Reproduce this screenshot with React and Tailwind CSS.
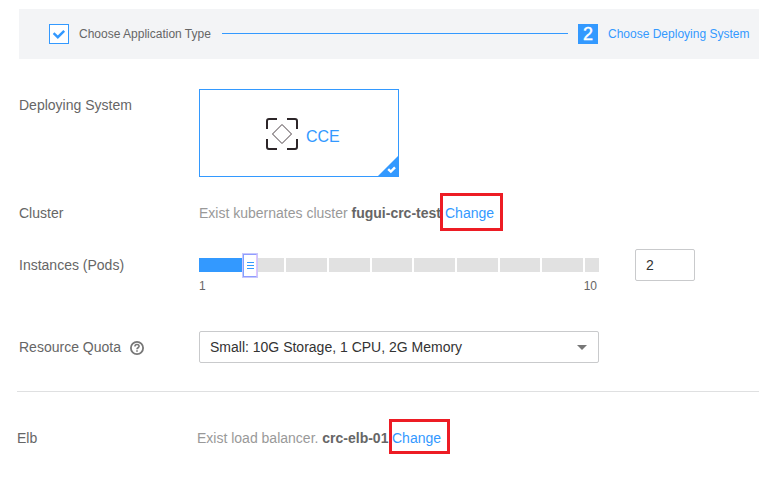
const SEGMENTS = [
  'w-[85px]',
  'w-[41px]',
  'w-[41px]',
  'w-[40px]',
  'w-[41px]',
  'w-[41px]',
  'w-[40px]',
  'w-[41px]',
  'w-[14px]',
];

function StepBar() {
  return (
    <header className="ml-[19px] flex h-[50px] items-center bg-[#f3f4f6] pl-[30px] text-xs">
      <span className="flex size-5 shrink-0 items-center justify-center border border-[#3399ff] bg-white">
        <svg width="14" height="12" viewBox="0 0 14 12" fill="none">
          <path d="M1.6 5.2 L5.8 9.2 L12.2 2.8" stroke="#3399ff" strokeWidth="2.4" />
        </svg>
      </span>
      <span className="ml-2.5 w-[133px] whitespace-nowrap">Choose Application Type</span>
      <span className="mb-px ml-2.5 h-px w-[346px] bg-[#3399ff]" />
      <span className="ml-2.5 flex size-5 items-center justify-center bg-[#3399ff] text-lg leading-5 text-white [-webkit-text-stroke:0.4px_white]">2</span>
      <span className="ml-2.5 whitespace-nowrap text-[#3399ff]">Choose Deploying System</span>
    </header>
  );
}

function SystemCard() {
  return (
    <div className="relative flex h-[88px] w-[200px] items-center border border-[#3399ff] pl-[66px]">
      <svg className="mt-px" width="32" height="32" viewBox="0 0 32 32" fill="none">
        <path
          d="M1 11V3Q1 1 3 1H11 M21 1H29Q31 1 31 3V11 M31 21V29Q31 31 29 31H21 M11 31H3Q1 31 1 29V21"
          stroke="#2d2629"
          strokeWidth="2"
        />
        <path d="M16 6.5L25.5 16L16 25.5L6.5 16Z" stroke="#4b4045" />
      </svg>
      <span className="mt-2 ml-2 text-base leading-5 text-[#3399ff]">CCE</span>
      <svg className="absolute right-0 bottom-0" width="20" height="20" viewBox="0 0 20 20" fill="none">
        <path d="M20 0V20H0Z" fill="#3399ff" />
        <path d="M10.2 13.2L12.8 15.6L17 11.3" stroke="white" strokeWidth="2.4" />
      </svg>
    </div>
  );
}

function Slider() {
  return (
    <div className="w-[400px]">
      <div className="relative flex h-3.5 gap-0.5">
        {SEGMENTS.map((width, i) => (
          <span key={i} className={`${width} h-full shrink-0 bg-[#e1e1e1]`} />
        ))}
        <span className="absolute top-0 left-0 h-full w-11 bg-[#3399ff]" />
        <span className="absolute -top-[5px] left-[43px] h-[25px] w-4 border border-[#c8c8fc]">
          <span className="flex h-full flex-col items-center justify-center gap-0.5 border border-t-[#8f9dff] border-r-[#e3c4fb] border-b-[#8f9dff] border-l-[#80a0ff] bg-white">
            <span className="h-px w-[7px] bg-[#3399ff]" />
            <span className="h-px w-[7px] bg-[#3399ff]" />
            <span className="h-px w-[7px] bg-[#3399ff]" />
          </span>
        </span>
      </div>
      <div className="mt-1.5 flex justify-between pr-0.5 text-xs leading-4">
        <span>1</span>
        <span>10</span>
      </div>
    </div>
  );
}

function Label({ children }) {
  return <div className="flex w-[180px] shrink-0 items-center">{children}</div>;
}

export default function App() {
  return (
    <main className="h-[478px] w-[759px] overflow-hidden bg-white pt-[9px] font-['Liberation_Sans',Arial,sans-serif] text-sm leading-5 text-[#666]">
      <StepBar />
      <section className="mt-[30px] flex pl-[19px]">
        <div className="pt-1.5"><Label>Deploying System</Label></div>
        <SystemCard />
      </section>
      <section className="mt-4 flex h-[38px] items-center pl-[19px]">
        <div className="pt-0.5"><Label>Cluster</Label></div>
        <span className="w-[241px] shrink-0 pt-0.5 whitespace-nowrap text-[#999]">
          Exist kubernates cluster <b className="text-[#666]">fugui-crc-test</b>
        </span>
        <span className="flex h-[38px] w-[63px] items-center border-[3px] border-[#ed1c24] pt-0.5 pl-0.5 text-[#3399ff]">Change</span>
      </section>
      <section className="mt-[18px] flex h-[82px] items-start pl-[19px]">
        <div className="pt-1.5"><Label>Instances (Pods)</Label></div>
        <div className="pt-[9px]"><Slider /></div>
        <div className="ml-9 flex h-8 w-[60px] items-center rounded-xs border border-[#c9cacc] pl-2.5 text-[#333]">2</div>
      </section>
      <section className="flex h-8 items-center pl-[19px]">
        <Label>
          Resource Quota
          <svg className="mt-0.5 ml-[9px]" width="14" height="14" viewBox="0 0 14 14" fill="none">
            <circle cx="7" cy="7" r="6.1" stroke="#777" strokeWidth="1.8" />
            <path d="M4.9 5.5C4.9 2.8 9.1 2.8 9.1 5.3C9.1 6.8 7 6.7 7 8.3M7 9.3V10.8" stroke="#777" strokeWidth="1.6" />
          </svg>
        </Label>
        <div className="flex h-8 w-[400px] items-center justify-between rounded-xs border border-[#c9cacc] pr-[11px] pl-2.5 text-[#333]">
          <span>Small: 10G Storage, 1 CPU, 2G Memory</span>
          <svg width="10" height="5" viewBox="0 0 10 5">
            <path d="M0 0H10L5 5Z" fill="#777" />
          </svg>
        </div>
      </section>
      <hr className="mt-7 ml-[17px] border-[#dfe0e1]" />
      <section className="mt-[27px] flex h-[35px] items-center pl-[17px]">
        <div className="pt-0.5"><Label>Elb</Label></div>
        <span className="w-48 shrink-0 pt-0.5 whitespace-nowrap text-[#999]">
          Exist load balancer. <b className="text-[#666]">crc-elb-01</b>
        </span>
        <span className="flex h-[35px] w-[61px] items-center border-[3px] border-[#ed1c24] pt-0.5 text-[#3399ff]">Change</span>
      </section>
    </main>
  );
}
